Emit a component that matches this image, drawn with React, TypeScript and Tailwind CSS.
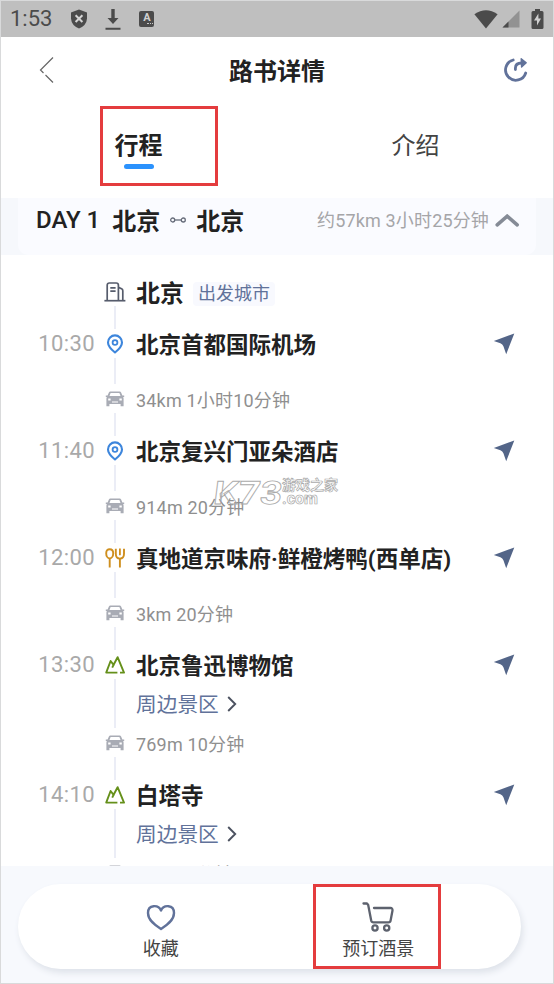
import type { ReactNode } from "react";

type Stop = {
  time: string;
  kind: "pin" | "food" | "scenic";
  name: string;
  leg: string;
  nearby?: boolean;
};

const stops: Stop[] = [
  { time: "10:30", kind: "pin", name: "北京首都国际机场", leg: "34km 1小时10分钟" },
  { time: "11:40", kind: "pin", name: "北京复兴门亚朵酒店", leg: "914m 20分钟" },
  { time: "12:00", kind: "food", name: "真地道京味府·鲜橙烤鸭(西单店)", leg: "3km 20分钟" },
  { time: "13:30", kind: "scenic", name: "北京鲁迅博物馆", leg: "769m 10分钟", nearby: true },
  { time: "14:10", kind: "scenic", name: "白塔寺", leg: "1km 20分钟", nearby: true },
];

function BuildingIcon() {
  return (
    <svg width="22" height="20" viewBox="0 0 22 20" fill="none" stroke="#565c6c" strokeWidth="1.7">
      <path d="M3.2 18.5V3.2Q3.2 1 5.4 1H12.2Q14.4 1 14.4 3.2V18.5" />
      <path d="M14.4 5.4L17.6 6.8Q18.8 7.4 18.8 8.8V18.5" />
      <path d="M6.3 5.8H11.6M6.3 9.2H11.6" />
      <path d="M0.4 18.7H21.4" />
    </svg>
  );
}

function PinIcon() {
  return (
    <svg width="18" height="20" viewBox="0 0 18 20" fill="none" stroke="#3d86dc" strokeWidth="2.1">
      <path d="M9 18.5C6 16 2 12.6 2 8.4A7 7 0 0 1 16 8.4C16 12.6 12 16 9 18.5Z" strokeLinejoin="round" />
      <circle cx="9" cy="8.5" r="2.4" strokeWidth="1.8" />
    </svg>
  );
}

function FoodIcon() {
  return (
    <svg width="20" height="20" viewBox="0 0 20 20" fill="none" stroke="#cf8f1e" strokeWidth="1.9">
      <path d="M4.7 10.4C2.6 10.4 1.2 8 1.2 5.2C1.2 2.6 2.6 1.2 4.7 1.2C6.8 1.2 8.2 2.6 8.2 5.2C8.2 8 6.8 10.4 4.7 10.4Z" />
      <path d="M4.7 10.4V19.5" />
      <path d="M10.8 0.8V5.8Q10.8 10.6 14.9 10.6Q19 10.6 19 5.8V0.8" />
      <path d="M14.9 10V19.5" />
      <path d="M14.9 0.6V7.2" strokeWidth="1.8" />
    </svg>
  );
}

function ScenicIcon() {
  return (
    <svg width="20" height="18" viewBox="0 0 20 18" fill="none" stroke="#65901a" strokeWidth="1.9" strokeLinejoin="round">
      <path d="M12.4 16.6H1.2L5.6 5L8.6 8.8L12.6 1.2L19 16.6H15" />
      <path d="M8.6 8.8L7.2 11.6" />
    </svg>
  );
}

function CarIcon() {
  return (
    <svg width="20" height="16" viewBox="0 0 20 16">
      <path
        fill="#a9acb5"
        fillRule="evenodd"
        d="M5.4 0.4H14.6Q15.7 0.4 16.1 1.4L17.4 4.4H19.2V6H18.2L18.6 7.4V15.2H15.6V13H4.4V15.2H1.4V7.4L1.8 6H0.8V4.4H2.6L3.9 1.4Q4.3 0.4 5.4 0.4ZM5.6 2L4.5 5H15.5L14.4 2ZM3.2 7.4V9.4H5.6V7.4ZM14.4 7.4V9.4H16.8V7.4ZM7 10.6V11.6H13V10.6Z"
      />
    </svg>
  );
}

function NavArrow() {
  return (
    <svg width="22" height="22" viewBox="0 0 22 22">
      <path d="M21.3 0.5L0.8 7.9L7.4 10.3Q9.6 11.1 10.4 13.3L13.2 21.2Z" fill="#536588" />
    </svg>
  );
}

function StopIcon({ kind }: { kind: Stop["kind"] }) {
  if (kind === "pin") return <PinIcon />;
  if (kind === "food") return <FoodIcon />;
  return <ScenicIcon />;
}

function Rail({ children }: { children?: ReactNode }) {
  return (
    <div className="flex w-[22px] shrink-0 items-center justify-center self-stretch">
      {children ?? <span className="h-full w-[1.5px] bg-[#ebedf6]" />}
    </div>
  );
}

function StopItem({ stop }: { stop: Stop }) {
  return (
    <li>
      <div className="flex h-[29px] items-center">
        <span className="w-[94px] text-right text-[22px] tracking-[0.4px] text-[#a9a9a9]">
          {stop.time}
        </span>
        <span className="w-[9px]" />
        <Rail>
          <StopIcon kind={stop.kind} />
        </Rail>
        <span className="ml-[10px] mt-[3px] flex-1 whitespace-nowrap text-[22.5px] font-bold text-[#222]">
          {stop.name}
        </span>
        <span className="mr-[38px]">
          <NavArrow />
        </span>
      </div>
      <div className={stop.nearby ? "flex h-[49px] pl-[103px]" : "flex h-[26px] pl-[103px]"}>
        <Rail />
        {stop.nearby && (
          <span className="ml-[10px] flex items-center gap-2 pt-[3px] text-[20.7px] text-[#61729a]">
            周边景区
            <svg className="-mt-[2px]" width="10" height="16" viewBox="0 0 10 16" fill="none" stroke="#4c5260" strokeWidth="1.9">
              <path d="M1.2 1L8.2 8L1.2 15" />
            </svg>
          </span>
        )}
      </div>
      <div className="flex h-[29px] items-center pl-[103px]">
        <Rail>
          <CarIcon />
        </Rail>
        <span className="ml-[10px] mt-[4px] whitespace-nowrap text-[18px] tracking-[0.18px] text-[#8f8f8f]">
          {stop.leg}
        </span>
      </div>
      <div className="flex h-[23px] pl-[103px]">
        <Rail />
      </div>
    </li>
  );
}

function StatusBar() {
  return (
    <div className="flex h-9 shrink-0 items-center bg-[#bfbfbf] pl-[9px] pr-[9px] text-[#4b4b4b]">
      <span className="text-[22px]">1:53</span>
      <svg className="ml-[18px]" width="18" height="20" viewBox="0 0 18 20">
        <path d="M9 0.5L17 3.5V9.5Q16.5 16.5 9 19.5Q1.5 16.5 1 9.5V3.5Z" fill="currentColor" />
        <path d="M5.6 6.2L12.4 13M12.4 6.2L5.6 13" stroke="#d4d4d4" strokeWidth="2" />
      </svg>
      <svg className="ml-[17px]" width="16" height="21" viewBox="0 0 16 21" fill="currentColor">
        <path d="M6.3 0H9.7V9H13.5L8 15L2.5 9H6.3ZM0.5 18.8H15.5V20.8H0.5Z" />
      </svg>
      <span className="ml-[18px] flex h-4 w-[15px] flex-col items-center rounded-[2px] bg-[#4b4b4b] pt-[2px] text-[11px] font-bold leading-[10px] text-[#d0d0d0]">
        A
        <span className="mr-px w-[6px] self-end border-b-[1.5px] border-dotted border-[#c8c8c8]" />
      </span>
      <span className="flex-1" />
      <svg width="24" height="19" viewBox="0 0 24 19" fill="currentColor">
        <path d="M12 18.5L0.4 4.2Q12 -3.5 23.6 4.2Z" />
      </svg>
      <svg className="ml-1" width="18" height="18" viewBox="0 0 18 18">
        <path d="M0.5 17.5L17.5 0.5V17.5Z" fill="#929292" />
        <path d="M0.5 17.5L6.5 11.5V17.5Z" fill="currentColor" />
      </svg>
      <svg className="ml-[11px]" width="13" height="20" viewBox="0 0 13 20">
        <path d="M4 0H9V2H11Q12.5 2 12.5 3.5V18.5Q12.5 20 11 20H2Q0.5 20 0.5 18.5V3.5Q0.5 2 2 2H4Z" fill="currentColor" />
        <path d="M7.4 4.5L3 11.5H6V16.5L10 9.5H7.4Z" fill="#d0d0d0" />
      </svg>
    </div>
  );
}

export default function App() {
  return (
    <div className="relative flex h-[984px] w-[554px] flex-col overflow-hidden border border-[#d9dadb] bg-white font-['Roboto','Noto_Sans_CJK_SC',sans-serif] leading-none text-[#222]">
      <StatusBar />

      <header className="grid h-[67px] shrink-0 grid-cols-[1fr_auto_1fr] items-center pl-[38px] pr-[24px]">
        <svg className="-mt-[2px]" width="15" height="26" viewBox="0 0 15 26" fill="none" stroke="#666" strokeWidth="1.2">
          <path d="M14 0.5L1.5 13L4.5 16M6.5 18L14 25.5" />
        </svg>
        <h1 className="-ml-[14px] mt-[2px] text-[24px] font-bold">路书详情</h1>
        <svg className="-mt-[2px] justify-self-end" width="26" height="26" viewBox="0 0 26 26" fill="none" stroke="#61729a" strokeWidth="2.8" strokeLinecap="round" strokeLinejoin="round">
          <path d="M10.2 3A10.300 10.300 0 1 0 22.700 16" />
          <path d="M12.4 12.6V11Q12.6 6 18.5 6" />
          <path d="M18.2 1.8L23.2 5.8L18.6 10Z" fill="#61729a" strokeWidth="1.4" />
        </svg>
      </header>

      <nav className="grid h-[94px] shrink-0 grid-cols-2 text-center text-[24px]">
        <button className="flex flex-col items-center pt-[30px]">
          <span className="-ml-px font-bold leading-[24px]">行程</span>
          <span className="-ml-px mt-[6px] h-[5px] w-[30px] rounded-full bg-[#2b92fd]" />
        </button>
        <button className="flex flex-col items-center pt-[30px] text-[#444]">
          <span className="ml-px leading-[24px]">介绍</span>
        </button>
      </nav>

      <section className="h-[57px] shrink-0 bg-[#f6f8fc] px-[17px]">
        <div className="flex h-full items-center rounded-b-[10px] bg-[#fafbff] pb-[12px] pl-[18px] pr-[16px]">
          <span className="-mt-px text-[24px] font-medium">DAY 1</span>
          <span className="ml-[12px] mt-[2px] text-[24px] font-bold">北京</span>
          <svg className="mx-[10px] -mt-[2px]" width="16" height="6" viewBox="0 0 16 6" fill="none" stroke="#666c7a" strokeWidth="1.3">
            <circle cx="2.7" cy="3" r="2" />
            <circle cx="13.3" cy="3" r="2" />
            <path d="M4.7 3H11.3" />
          </svg>
          <span className="mt-[2px] text-[24px] font-bold">北京</span>
          <span className="ml-auto mt-px text-[18px] tracking-[0.15px] text-[#a5a5a8]">约57km 3小时25分钟</span>
          <svg className="ml-[6px]" width="25" height="14" viewBox="0 0 25 14" fill="none" stroke="#858b96" strokeWidth="3.6" strokeLinecap="round">
            <path d="M2.2 10.8L12.2 2.2L22.2 10.8" />
          </svg>
        </div>
      </section>

      <main className="relative min-h-0 flex-1 overflow-hidden pt-[23px]">
        <div className="flex h-7 items-center pl-[103px]">
          <Rail>
            <BuildingIcon />
          </Rail>
          <span className="ml-[10px] mt-[4px] text-[24px] font-bold">北京</span>
          <span className="ml-[9px] mt-[3px] rounded bg-[#f8f9fe] px-[5px] py-[3px] text-[18px] text-[#61729a]">
            出发城市
          </span>
        </div>
        <div className="flex h-[23px] pl-[103px]">
          <Rail />
        </div>
        <ul>
          {stops.map((stop) => (
            <StopItem key={stop.time} stop={stop} />
          ))}
        </ul>

        {/* watermark */}
        <div className="absolute left-[213px] top-[222px] flex items-start text-transparent">
          <span className="inline-block w-[64px] origin-left -skew-x-6 scale-x-[1.2] text-[32px] font-bold leading-[32px] [-webkit-text-stroke:0.8px_#aaa]">
            K73
          </span>
          <span className="ml-[4px] flex flex-col pt-px font-bold">
            <span className="whitespace-nowrap text-[14px] leading-[15px] [-webkit-text-stroke:0.7px_#aaa]">游戏之家</span>
            <span className="text-[16px] leading-[11px] [-webkit-text-stroke:0.7px_#aaa]">.com</span>
          </span>
        </div>
      </main>

      <footer className="h-[117px] shrink-0 bg-[#f7f9fd] pl-[17px] pr-[32px] pt-[18px]">
        <div className="grid h-[85px] grid-cols-2 rounded-full bg-white px-[34px] text-[18px] text-[#444] shadow-[2px_4px_6px_#dfe3ea]">
          <button className="flex flex-col items-center pt-[20px]">
            <svg width="30" height="27" viewBox="0 0 30 27" fill="none" stroke="#61729a" strokeWidth="2.4" strokeLinejoin="round">
              <path d="M15 6.5C12.5 0.5 2 0.2 2 9C2 16.5 9.5 21.5 15 25C20.5 21.5 28 16.5 28 9C28 0.2 17.5 0.5 15 6.5Z" />
            </svg>
            <span className="mt-[9px]">收藏</span>
          </button>
          <button className="flex flex-col items-center pt-[18px]">
            <svg width="32" height="30" viewBox="0 0 32 30" fill="none" stroke="#5d626e" strokeWidth="2.3" strokeLinecap="round" strokeLinejoin="round">
              <path d="M1.5 1.5H5L6.2 3L9.2 18.5Q9.6 20.3 11.5 20.3H26.5Q28.3 20.3 28.6 18.5L30.5 8.5Q30.7 6 28.5 6H12" />
              <circle cx="13" cy="26" r="2.6" />
              <circle cx="24.7" cy="26" r="2.6" />
            </svg>
            <span className="mt-[8px]">预订酒景</span>
          </button>
        </div>
      </footer>

      {/* highlight frames */}
      <div className="absolute left-[99px] top-[105px] h-[80px] w-[118px] border-[3px] border-[#e43c3e]" />
      <div className="absolute left-[312px] top-[883px] h-[85px] w-[128px] border-[3px] border-[#e43c3e]" />
    </div>
  );
}
